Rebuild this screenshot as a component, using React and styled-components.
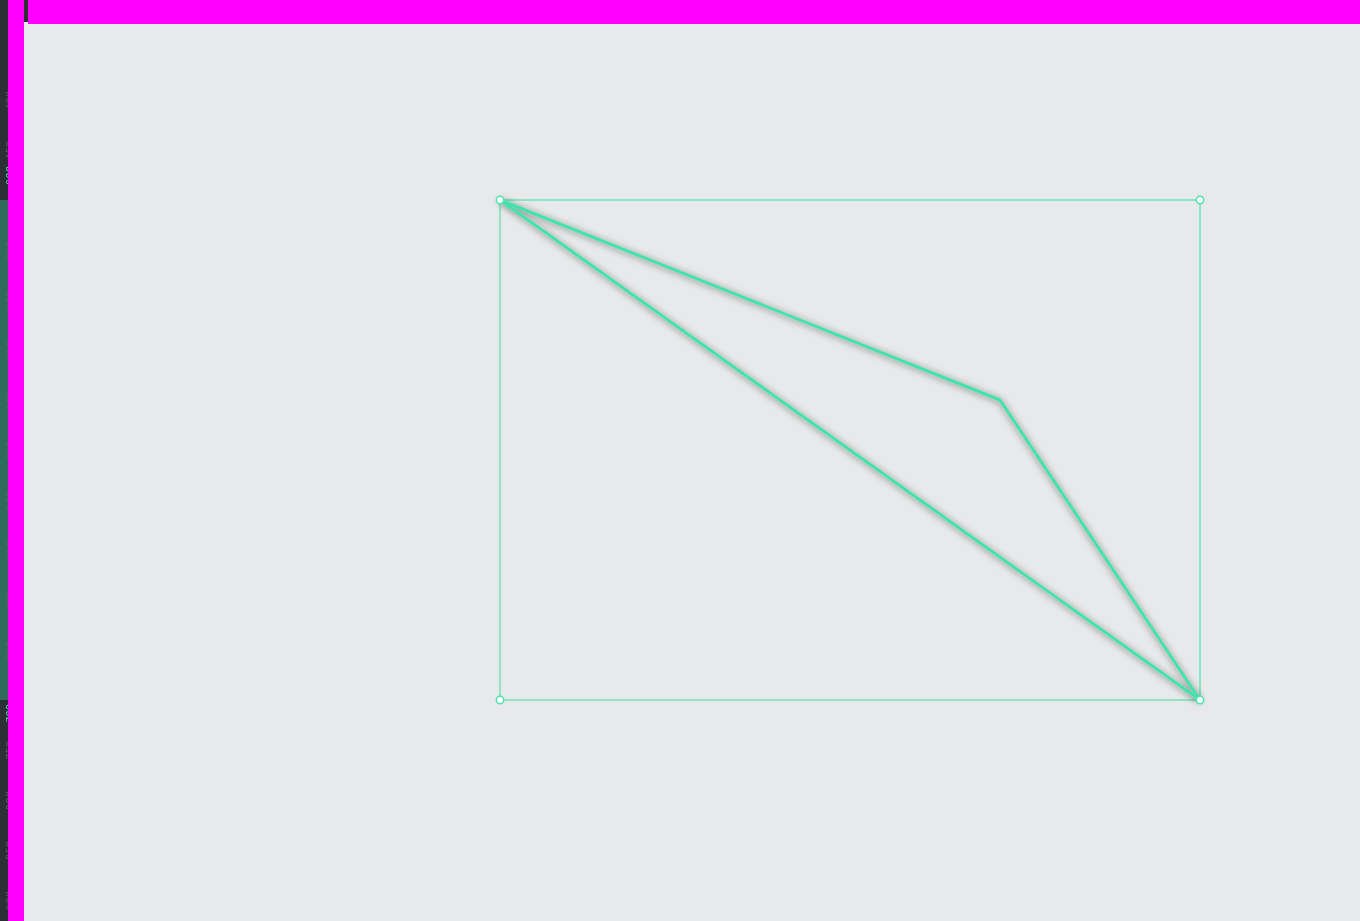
import React from "react";
import styled, {createGlobalStyle} from "styled-components";

const GlobalStyle = createGlobalStyle`
    html, body {
        margin: 0;
        padding: 0;
        overflow: hidden;
        font-family: Inter, "Liberation Sans", sans-serif;
    }
`;

const Page = styled.div`
    display: grid;
    grid-template-columns: 8px 16px 1fr;
    width: 1360px;
    height: 921px;
    background: #e8e9ea;
`;

const Ruler = styled.div`
    position: relative;
    overflow: hidden;
    background: #2c2f33;
`;

const RulerBand = styled.div`
    position: absolute;
    left: 0;
    right: 0;
    background: #2f6a5b;
`;

const RulerLabel = styled.span`
    position: absolute;
    left: 5px;
    writing-mode: vertical-rl;
    transform: rotate(180deg);
    font-size: 9px;
    line-height: 9px;
    letter-spacing: 1px;
    color: ${p => p.$active ? '#3ee6ad' : '#5f6672'};
`;

const Stripe = styled.div`
    background: #ff00ff;
`;

const Main = styled.div`
    display: flex;
    flex-direction: column;
    min-width: 0;
`;

const TopBar = styled.div`
    display: flex;
    height: 24px;
    flex-shrink: 0;
`;

const Corner = styled.div`
    width: 4px;
    height: 22px;
    background: #2c2f33;
`;

const TopFill = styled.div`
    flex: 1;
    background: #ff00ff;
`;

const Canvas = styled.div`
    flex: 1;
    position: relative;
    background: #e8e9ea;
`;

const Drawing = styled.svg`
    position: absolute;
    inset: 0;
    width: 100%;
    height: 100%;
`;

const labels = [90, 140, 240, 290, 340, 390, 440, 490, 540, 590, 640, 740, 790, 840, 890];

const Selection = () => (
    <Drawing viewBox="24 24 1336 897">
        <defs>
            <filter id="glow" x="-20%" y="-20%" width="140%" height="140%">
                <feDropShadow dx="0" dy="1" stdDeviation="3.5" floodColor="#000" floodOpacity="0.55"/>
            </filter>
        </defs>
        <rect x="500" y="200" width="700" height="500" fill="none" stroke="#6ee4bb" strokeWidth="1.5"/>
        <g filter="url(#glow)" fill="none" stroke="#42e3aa" strokeWidth="3" strokeLinejoin="round">
            <polyline points="500,200 1000,400 1200,700"/>
            <line x1="500" y1="200" x2="1200" y2="700"/>
        </g>
        {[[500, 200], [1200, 200], [500, 700], [1200, 700]].map(([cx, cy]) => (
            <circle key={cx + '-' + cy} cx={cx} cy={cy} r="3.7" fill="#fff" stroke="#4fe2b0" strokeWidth="1.5"/>
        ))}
    </Drawing>
);

const App = () => {
    return (
        <>
            <GlobalStyle/>
            <Page>
                <Ruler>
                    <RulerBand style={{top: 200, height: 500}}/>
                    {labels.map(y => (
                        <RulerLabel key={y} style={{top: y}}>{y + 10}</RulerLabel>
                    ))}
                    <RulerLabel $active style={{top: 165}}>200</RulerLabel>
                    <RulerLabel $active style={{top: 703}}>700</RulerLabel>
                </Ruler>
                <Stripe/>
                <Main>
                    <TopBar>
                        <Corner/>
                        <TopFill/>
                    </TopBar>
                    <Canvas>
                        <Selection/>
                    </Canvas>
                </Main>
            </Page>
        </>
    )
};

export default App;
